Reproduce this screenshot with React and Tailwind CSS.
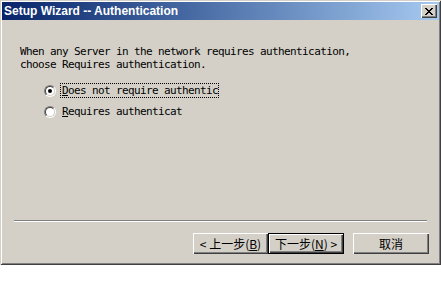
import React from 'react'

const Radio = ({ checked }) => {
  return (
    <div className="w-[12px] h-[12px] rounded-full border border-t-[#808080] border-l-[#808080] border-b-white border-r-white">
      <div className="w-full h-full rounded-full border border-t-[#404040] border-l-[#404040] border-b-[#d4d0c8] border-r-[#d4d0c8] bg-white flex items-center justify-center">
        {checked && <div className="w-[4px] h-[4px] rounded-full bg-black" />}
      </div>
    </div>
  )
}

const Button = ({ children, width, isDefault }) => {
  if (isDefault) {
    return (
      <div className={`${width} h-[21px] border border-black`}>
        <div className="w-full h-full bg-[#d4d0c8] shadow-[inset_1px_1px_#ffffff,inset_-1px_-1px_#404040,inset_-2px_-2px_#808080] flex items-center justify-center text-[12px] text-black">
          {children}
        </div>
      </div>
    )
  }
  return (
    <div className={`${width} h-[21px] bg-[#d4d0c8] shadow-[inset_1px_1px_#ffffff,inset_-1px_-1px_#404040,inset_-2px_-2px_#808080] flex items-center justify-center text-[12px] text-black`}>
      {children}
    </div>
  )
}

const App = () => {
  return (
    <div className="w-[441px] h-[265px] bg-[#d4d0c8] p-[2px] flex flex-col shadow-[inset_1px_1px_#d4d0c8,inset_-1px_-1px_#404040,inset_2px_2px_#ffffff,inset_-2px_-2px_#808080]">
      {/* title bar */}
      <div className="h-[18px] bg-linear-to-r from-[#0a246a] to-[#a6caf0] flex items-center pl-[2px] pr-[2px]">
        <span className="text-white font-bold text-[12px] leading-none" style={{ fontFamily: '"Liberation Sans", Arial, sans-serif' }}>
          Setup Wizard -- Authentication
        </span>
        <div className="ml-auto w-[16px] h-[14px] bg-[#d4d0c8] shadow-[inset_1px_1px_#ffffff,inset_-1px_-1px_#404040,inset_-2px_-2px_#808080] flex items-center justify-center">
          <svg width="8" height="7" viewBox="0 0 8 7" shapeRendering="crispEdges">
            <path d="M0 0h2v1h-2zM6 0h2v1h-2zM1 1h2v1h-2zM5 1h2v1h-2zM2 2h4v1h-4zM3 3h2v1h-2zM2 4h4v1h-4zM1 5h2v1h-2zM5 5h2v1h-2zM0 6h2v1h-2zM6 6h2v1h-2z" fill="#000" />
          </svg>
        </div>
      </div>

      {/* body */}
      <div className="flex-1 flex flex-col text-black" style={{ fontFamily: '"DejaVu Sans Mono", "Liberation Mono", monospace' }}>
        <p className="ml-[18px] mt-[25px] text-[11px] leading-[13px] tracking-[-0.62px]">
          When any Server in the network requires authentication,
          <br />
          choose Requires authentication.
        </p>

        <div className="ml-[42px] mt-[12px] flex flex-col gap-[6px] text-[11px] tracking-[-0.62px]">
          <div className="h-[15px] flex items-center">
            <Radio checked />
            <div className="ml-[4px] w-[159px] h-[15px] leading-[13px] pl-[1px] whitespace-nowrap border border-dotted border-black">
              <span className="underline">D</span>oes not require authentic
            </div>
          </div>
          <div className="h-[15px] flex items-center">
            <Radio />
            <div className="ml-[4px] h-[15px] leading-[13px] pl-[1px] border border-transparent whitespace-nowrap">
              <span className="underline">R</span>equires authenticat
            </div>
          </div>
        </div>

        <div className="flex-1" />

        {/* separator */}
        <div className="ml-[12px] mr-[12px] h-[2px] border-t border-t-[#808080] border-b border-b-white" />

        <div className="mt-[11px] mb-[9px] mr-[10px] flex justify-end" style={{ fontFamily: '"Noto Sans CJK SC", "Liberation Sans", sans-serif' }}>
          <Button width="w-[75px]">
            &lt; 上一步(<span className="underline">B</span>)
          </Button>
          <Button width="w-[76px]" isDefault>
            下一步(<span className="underline">N</span>) &gt;
          </Button>
          <div className="w-[9px]" />
          <Button width="w-[76px]">取消</Button>
        </div>
      </div>
    </div>
  )
}

export default App
